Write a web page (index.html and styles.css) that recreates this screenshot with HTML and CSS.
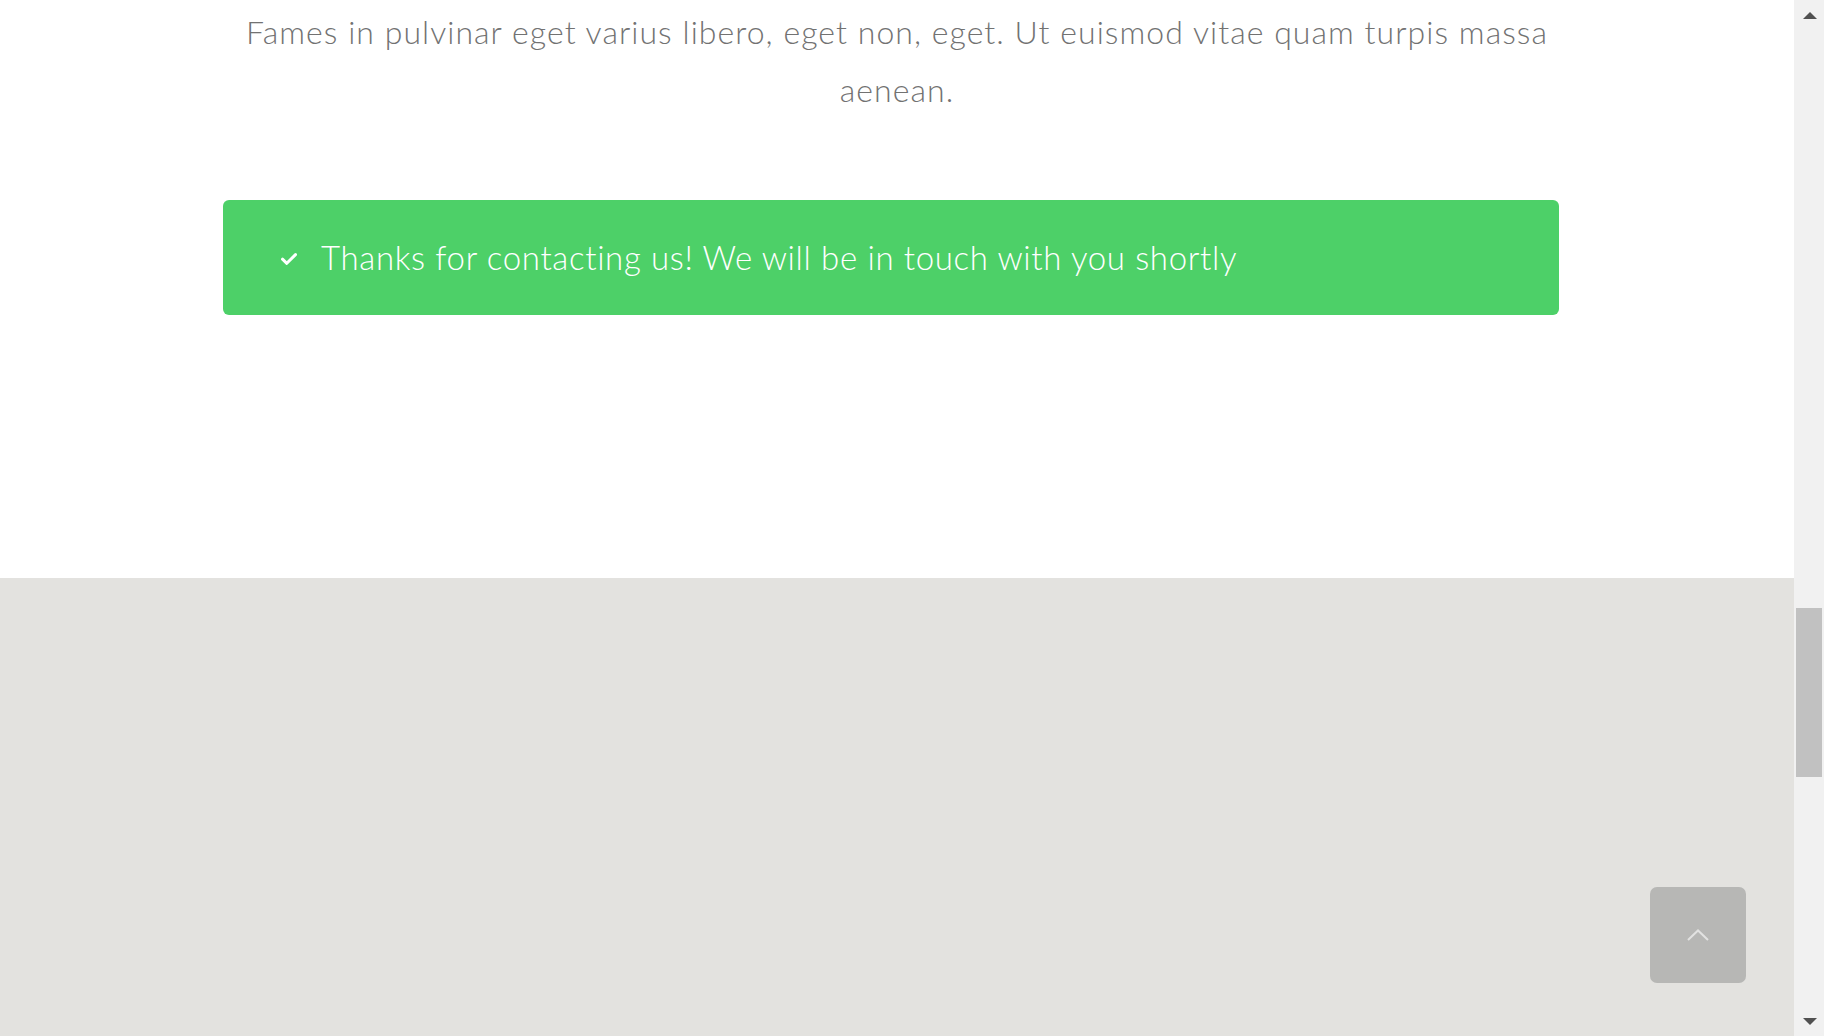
FILE: index.html
```html
<!DOCTYPE html>
<html lang="en">
<head>
<meta charset="utf-8">
<title>Contact</title>
<link rel="stylesheet" href="styles.css">
</head>
<body>
<div class="page">
  <div class="main">
    <section class="contact">
      <p class="intro">Fames in pulvinar eget varius libero, eget non, eget. Ut euismod vitae quam turpis massa aenean.</p>
      <div class="alert">
        <svg class="check" viewBox="0 0 16 12" width="16" height="12" aria-hidden="true">
          <path d="M1.5 6.2 L5.8 10.3 L14.5 1.6" fill="none" stroke="#fff" stroke-width="3" stroke-linecap="round" stroke-linejoin="round"/>
        </svg>
        <span class="alert-text">Thanks for contacting us! We will be in touch with you shortly</span>
      </div>
    </section>
    <section class="map">
      <a class="to-top" href="#" aria-label="Back to top">
        <svg viewBox="0 0 22 12" width="22" height="12" aria-hidden="true">
          <path d="M1 11 L11 1.5 L21 11" fill="none" stroke="#e2e2e1" stroke-width="2"/>
        </svg>
      </a>
    </section>
  </div>
  <div class="scrollbar">
    <div class="sb-btn"><span class="tri-up"></span></div>
    <div class="sb-track"><div class="sb-thumb"></div></div>
    <div class="sb-btn"><span class="tri-down"></span></div>
  </div>
</div>
</body>
</html>
```

FILE: styles.css
```css
html, body {
  margin: 0;
  padding: 0;
  height: 100%;
  overflow: hidden;
}
body {
  font-family: "Lato", "Liberation Sans", sans-serif;
  background: #ffffff;
}
.page {
  display: flex;
  height: 1036px;
}
.main {
  flex: 1;
  display: flex;
  flex-direction: column;
  min-width: 0;
}
.contact {
  height: 578px;
  box-sizing: border-box;
  padding-top: 3px;
  background: #ffffff;
}
.intro {
  margin: 0 auto;
  max-width: 1336px;
  text-align: center;
  font-size: 32px;
  line-height: 57.5px;
  font-weight: 300;
  letter-spacing: 1.05px;
  color: #727272;
}
.alert {
  margin: 82px 0 0 223px;
  width: 1336px;
  height: 115px;
  box-sizing: border-box;
  background: #4dd068;
  border-radius: 6px;
  display: flex;
  align-items: center;
  padding-left: 58px;
}
.check {
  flex: none;
  margin-right: 24px;
  margin-top: 2px;
}
.alert-text {
  color: #ffffff;
  font-size: 33px;
  font-weight: 300;
  letter-spacing: 0.65px;
  line-height: 1;
}
.map {
  flex: 1;
  background: #e3e2df;
  display: flex;
  justify-content: flex-end;
  align-items: flex-end;
  padding: 0 48px 53px 0;
}
.to-top {
  width: 96px;
  height: 96px;
  border-radius: 7px;
  background: #b7b7b5;
  display: flex;
  align-items: center;
  justify-content: center;
}
.scrollbar {
  width: 30px;
  flex: none;
  background: #f1f1f1;
  display: flex;
  flex-direction: column;
}
.sb-btn {
  height: 30px;
  display: flex;
  align-items: center;
  justify-content: center;
  padding-left: 2px;
}
.tri-up, .tri-down {
  width: 0;
  height: 0;
  border-left: 7px solid transparent;
  border-right: 7px solid transparent;
}
.tri-up {
  border-bottom: 7px solid #505050;
}
.tri-down {
  border-top: 7px solid #505050;
}
.sb-track {
  flex: 1;
  padding: 578px 2px 0 2px;
}
.sb-thumb {
  height: 169px;
  background: #c1c1c1;
}
```
